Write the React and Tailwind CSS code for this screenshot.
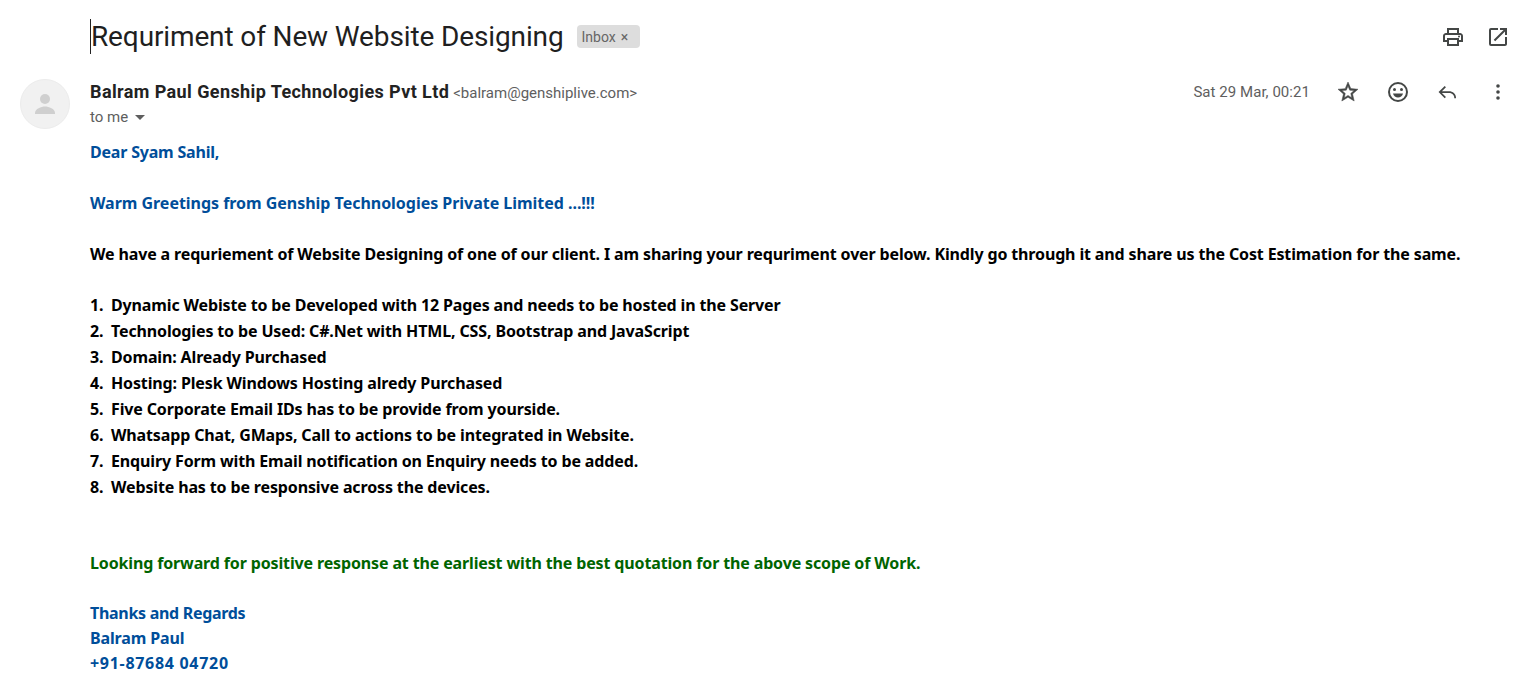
import React from "react";

const items = [
  ["1.", "Dynamic Webiste to be Developed with 12 Pages and needs to be hosted in the Server"],
  ["2.", "Technologies to be Used: C#.Net with HTML, CSS, Bootstrap and JavaScript"],
  ["3.", "Domain: Already Purchased"],
  ["4.", "Hosting: Plesk Windows Hosting alredy Purchased"],
  ["5.", "Five Corporate Email IDs has to be provide from yourside."],
  ["6.", "Whatsapp Chat, GMaps, Call to actions to be integrated in Website."],
  ["7.", "Enquiry Form with Email notification on Enquiry needs to be added."],
  ["8.", "Website has to be responsive across the devices."],
];

const Line = ({ className = "", children }) => (
  <div className={"whitespace-nowrap " + className}>{children}</div>
);

const Ico = ({ children, className = "" }) => (
  <svg viewBox="0 0 24 24" fill="#444746" className={"w-6 h-6 shrink-0 " + className}>{children}</svg>
);

export default function App() {
  return (
    <div className="w-[1514px] h-[681px] overflow-hidden bg-white font-['Roboto','Liberation_Sans',sans-serif]">
      <div className="h-[72px] flex items-start pl-[90px] pr-[4px]">
        <div className="flex items-center h-[35px] mt-[19px] border-l border-[#222]">
          <span className="text-[28px] leading-[36px] text-[#1f1f1f] whitespace-nowrap tracking-[-0.13px]">
            Requriment of New Website Designing
          </span>
        </div>
        <div className="mt-[25px] ml-[13px] h-[23px] w-[63px] bg-[#dddddd] rounded-[4px] flex items-center pl-[5px] pt-[1px] text-[14px] text-[#666]">
          Inbox<span className="ml-[5px] text-[14px]">×</span>
        </div>
        <div className="ml-auto mt-[25px] flex gap-[21px]">
          <Ico>
            <path d="M19 8h-1V3H6v5H5c-1.66 0-3 1.34-3 3v6h4v4h12v-4h4v-6c0-1.66-1.34-3-3-3zM8 5h8v3H8V5zm8 12v2H8v-4h8v2zm2-2v-2H6v2H4v-4c0-.55.45-1 1-1h14c.55 0 1 .45 1 1v4h-2z" />
            <circle cx="18" cy="11.5" r="1" />
          </Ico>
          <Ico>
            <path d="M19 19H5V5h7V3H5a2 2 0 00-2 2v14a2 2 0 002 2h14c1.1 0 2-.9 2-2v-7h-2v7zM14 3v2h3.59l-9.83 9.83 1.41 1.41L19 6.41V10h2V3h-7z" />
          </Ico>
        </div>
      </div>
      <div className="h-[56px] flex items-start pl-[20px] pr-[4px]">
        <div className="w-[50px] h-[50px] mt-[7px] rounded-full bg-[#f1f1f1] border border-[#ececec] flex items-center justify-center shrink-0">
          <svg viewBox="0 0 24 24" className="w-[30px] h-[30px]" fill="#cfcfcf">
            <circle cx="12" cy="8" r="4" />
            <path d="M4 19c0-3 5-5 8-5s8 2 8 5v1H4z" />
          </svg>
        </div>
        <div className="ml-[20px] mt-[8px]">
          <div className="flex items-baseline h-[24px]">
            <span className="text-[18px] font-bold text-[#222] leading-[24px] tracking-[0.4px]">Balram Paul Genship Technologies Pvt Ltd</span>
            <span className="ml-[4px] text-[15px] leading-[22px] text-[#5e5e5e]">&lt;balram@genshiplive.com&gt;</span>
          </div>
          <div className="flex items-center h-[26px] text-[15px] text-[#5e5e5e]">
            to me
            <span className="ml-[7px] w-0 h-0 border-x-[5px] border-x-transparent border-t-[5px] border-t-[#5e5e5e]" />
          </div>
        </div>
        <div className="ml-auto mt-[8px] flex items-center h-[24px]">
          <span className="text-[15px] text-[#5e5e5e] mr-[26px] tracking-[0.05px]">Sat 29 Mar, 00:21</span>
          <Ico>
            <path stroke="#444746" strokeWidth="0.5" d="M22 9.24l-7.19-.62L12 2 9.19 8.63 2 9.24l5.46 4.73L5.82 21 12 17.27 18.18 21l-1.63-7.03L22 9.24zM12 15.4l-3.76 2.27 1-4.28-3.32-2.88 4.38-.38L12 6.1l1.71 4.04 4.38.38-3.32 2.88 1 4.28L12 15.4z" />
          </Ico>
          <Ico className="ml-[26px]">
            <path d="M12 2a10 10 0 100 20 10 10 0 000-20zm0 18a8 8 0 110-16 8 8 0 010 16z" />
            <circle cx="8.5" cy="9.5" r="1.5" />
            <circle cx="15.5" cy="9.5" r="1.5" />
            <path d="M7 13.5h10c-.7 2.4-2.7 4-5 4s-4.3-1.6-5-4z" />
          </Ico>
          <Ico className="ml-[26px]">
            <path d="M9.6 6.4 8.2 5 1.2 12l7 7 1.4-1.4L5 13h8c3.3 0 6 2.2 6 5v1h2v-1c0-4-3.6-7-8-7H5z" transform="translate(1.5 1.5) scale(.88)" />
          </Ico>
          <Ico className="ml-[26px]">
            <circle cx="12" cy="6" r="1.8" />
            <circle cx="12" cy="12" r="1.8" />
            <circle cx="12" cy="18" r="1.8" />
          </Ico>
        </div>
      </div>
      <div className="pl-[90px] font-['Noto_Sans',sans-serif] font-bold text-[16px] tracking-[-0.14px]">
        <div className="text-[#004e9a] leading-[25.5px] mt-[12px]">
          <Line className="tracking-[-0.2px]">Dear Syam Sahil,</Line>
          <Line className="mt-[25.5px] tracking-[-0.03px]">Warm Greetings from Genship Technologies Private Limited ...!!!</Line>
        </div>
        <Line className="text-black leading-[25.5px] mt-[25.5px]">
          We have a requriement of Website Designing of one of our client. I am sharing your requriment over below. Kindly go through it and share us the Cost Estimation for the same.
        </Line>
        <div className="text-black leading-[26px] mt-[24px]">
          {items.map(([n, t]) => (
            <Line key={n}>
              <span className="inline-block w-[21px]">{n}</span>
              {t}
            </Line>
          ))}
        </div>
        <Line className="text-[#006400] leading-[25.5px] mt-[51px]">
          Looking forward for positive response at the earliest with the best quotation for the above scope of Work.
        </Line>
        <div className="text-[#004e9a] leading-[25px] mt-[24.5px]">
          <Line className="tracking-[-0.3px]">Thanks and Regards</Line>
          <Line>Balram Paul</Line>
          <Line className="tracking-[0.7px]">+91-87684 04720</Line>
        </div>
      </div>
    </div>
  );
}
